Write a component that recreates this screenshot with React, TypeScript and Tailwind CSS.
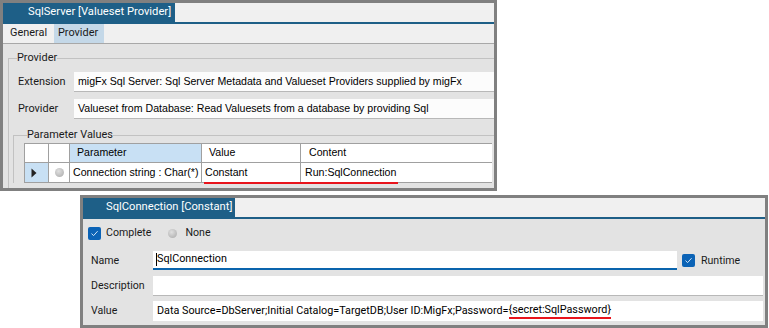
import React from "react";

const SEGOE = "font-['Roboto','Noto_Sans',sans-serif]";
const ARIAL = "font-['Liberation_Sans','Arial',sans-serif]";

function Check() {
  return (
    <span className="w-[13px] h-[13px] rounded-[2px] bg-[#0b63b6] flex items-center justify-center shrink-0">
      <svg width="9" height="9" viewBox="0 0 9 9">
        <path d="M1.5 4.6 L3.6 6.6 L7.6 2.2" fill="none" stroke="#cfe3f7" strokeWidth="1" />
      </svg>
    </span>
  );
}

function Window1() {
  return (
    <div className="w-[497px] h-[191px] border-[3px] border-[#808080] bg-[#e3e3e3] flex flex-col shrink-0">
      <div className="h-[21px] flex bg-[#f0f0f0] border-b-2 border-[#1e5f87] shrink-0">
        <div className={`w-[172px] bg-[#1e5f87] text-white text-[11.2px] pl-[25px] flex items-center whitespace-nowrap ${SEGOE}`}>
          SqlServer [Valueset Provider]
        </div>
      </div>
      <div className={`h-[20px] flex bg-[#f0f0f0] border-b border-[#a8a8a8] text-[10.9px] text-[#1a1a1a] shrink-0 ${SEGOE}`}>
        <div className="w-[51px] pl-[7px] flex items-center">General</div>
        <div className="w-[50px] pl-[4px] flex items-center bg-[#c4d8e8]">Provider</div>
      </div>
      <div className="flex-1 pl-[5px] pt-[7px]">
        <fieldset className="border-l border-t border-[#c2c2c2] h-full">
          <legend className={`ml-[8px] text-[10.9px] leading-[14px] text-[#1a1a1a] ${SEGOE}`}>Provider</legend>
          <div className="flex mt-[7px] h-[20px]">
            <div className={`w-[65px] pl-[9px] flex items-center text-[10.9px] text-[#1a1a1a] ${SEGOE}`}>Extension</div>
            <div className={`flex-1 bg-[#fcfcfc] border-b border-[#b8b8b8] pl-[4px] flex items-center text-[10.6px] text-black whitespace-nowrap ${ARIAL}`}>
              migFx Sql Server: Sql Server Metadata and Valueset Providers supplied by migFx
            </div>
          </div>
          <div className="flex mt-[7px] h-[20px]">
            <div className={`w-[65px] pl-[9px] flex items-center text-[10.9px] text-[#1a1a1a] ${SEGOE}`}>Provider</div>
            <div className={`flex-1 bg-[#fcfcfc] border-b border-[#b8b8b8] pl-[4px] flex items-center text-[10.6px] text-black whitespace-nowrap ${ARIAL}`}>
              Valueset from Database: Read Valuesets from a database by providing Sql
            </div>
          </div>
          <fieldset className="ml-[4px] mt-[9px] border-l border-t border-[#c2c2c2]">
            <legend className={`ml-[13px] text-[10.9px] leading-[14px] text-[#1a1a1a] ${SEGOE}`}>Parameter Values</legend>
            <div className={`relative ml-[10px] mr-[2px] mt-[1px] text-[10.6px] text-black whitespace-nowrap ${ARIAL}`}>
              <div className="flex h-[20px] border-t border-l border-[#a0a0a0]">
                <div className="w-[24px] bg-white border-r border-b border-[#a0a0a0]" />
                <div className="w-[21px] bg-white border-r border-b border-[#a0a0a0]" />
                <div className="w-[132px] bg-[#c8e0f4] border-r border-b border-[#a0a0a0] pl-[7px] flex items-center">Parameter</div>
                <div className="w-[99px] bg-white border-r border-b border-[#a0a0a0] pl-[7px] flex items-center">Value</div>
                <div className="flex-1 bg-white border-b border-[#a0a0a0] pl-[8px] flex items-center">Content</div>
              </div>
              <div className="flex h-[20px] border-l border-[#a0a0a0]">
                <div className="w-[24px] bg-[#c8e0f4] border-r border-b border-[#a0a0a0] flex items-center pl-[6px]">
                  <svg width="6" height="10" viewBox="0 0 6 10"><path d="M0.5 0.5 L5.5 5 L0.5 9.5 Z" fill="#222" /></svg>
                </div>
                <div className="w-[21px] bg-white border-r border-b border-[#a0a0a0] flex items-center justify-center">
                  <span className="w-[9px] h-[9px] rounded-full bg-[radial-gradient(circle_at_40%_35%,#e0e0e0,#a8a8a8)]" />
                </div>
                <div className="w-[132px] bg-white border-r border-b border-[#a0a0a0] pl-[3px] flex items-center overflow-hidden">Connection string : Char(*)</div>
                <div className="w-[99px] bg-white border-r border-b border-[#a0a0a0] pl-[3px] flex items-center">Constant</div>
                <div className="flex-1 bg-white border-b border-[#a0a0a0] pl-[4px] flex items-center">Run:SqlConnection</div>
              </div>
              <div className="absolute left-[180px] top-[39px] w-[194px] h-[2px] bg-[#e8141c]" />
            </div>
          </fieldset>
        </fieldset>
      </div>
    </div>
  );
}

function Window2() {
  return (
    <div className="ml-[80px] mt-[4px] w-[688px] h-[133px] border-[3px] border-[#808080] bg-[#e3e3e3] flex flex-col shrink-0">
      <div className="h-[21px] flex bg-[#f0f0f0] border-b-2 border-[#1e5f87] shrink-0">
        <div className={`w-[152px] bg-[#1e5f87] text-white text-[11.2px] pl-[23px] flex items-center whitespace-nowrap ${SEGOE}`}>
          SqlConnection [Constant]
        </div>
      </div>
      <div className={`h-[28px] flex items-center pl-[5px] text-[10.6px] text-[#1a1a1a] ${SEGOE}`}>
        <Check />
        <span className="ml-[5px]">Complete</span>
        <span className="ml-[17px] w-[9px] h-[9px] rounded-full bg-[radial-gradient(circle_at_40%_35%,#e0e0e0,#a8a8a8)]" />
        <span className="ml-[8px]">None</span>
      </div>
      <div className="flex mt-[4px] h-[19px]">
        <div className={`w-[70px] pl-[8px] flex items-center text-[10.6px] text-[#1a1a1a] ${SEGOE}`}>Name</div>
        <div className={`w-[524px] bg-white border-b-2 border-[#0a64ad] pl-[3px] flex items-center text-[10.8px] text-black whitespace-nowrap ${SEGOE}`}>
          <span className="w-px h-[13px] bg-black" />
          SqlConnection
        </div>
        <div className={`ml-[5px] flex items-center text-[10.6px] text-[#1a1a1a] ${SEGOE}`}>
          <Check />
          <span className="ml-[6px]">Runtime</span>
        </div>
      </div>
      <div className="flex mt-[6px] h-[20px]">
        <div className={`w-[70px] pl-[8px] flex items-center text-[10.6px] text-[#1a1a1a] ${SEGOE}`}>Description</div>
        <div className="flex-1 mr-[2px] bg-white border-b border-[#b8b8b8]" />
      </div>
      <div className="flex mt-[5px] h-[20px]">
        <div className={`w-[70px] pl-[8px] flex items-center text-[10.6px] text-[#1a1a1a] ${SEGOE}`}>Value</div>
        <div className={`flex-1 mr-[2px] bg-white pl-[4px] flex items-center text-[10.8px] text-black whitespace-nowrap ${SEGOE}`}>
          Data Source=DbServer;Initial Catalog=TargetDB;User ID:MigFx;Password=
          <span className="border-b-2 border-[#e8141c] leading-[14px]">{"{secret:SqlPassword}"}</span>
        </div>
      </div>
    </div>
  );
}

export default function App() {
  return (
    <div className="w-[769px] h-[328px] bg-white flex flex-col overflow-hidden">
      <Window1 />
      <Window2 />
    </div>
  );
}
